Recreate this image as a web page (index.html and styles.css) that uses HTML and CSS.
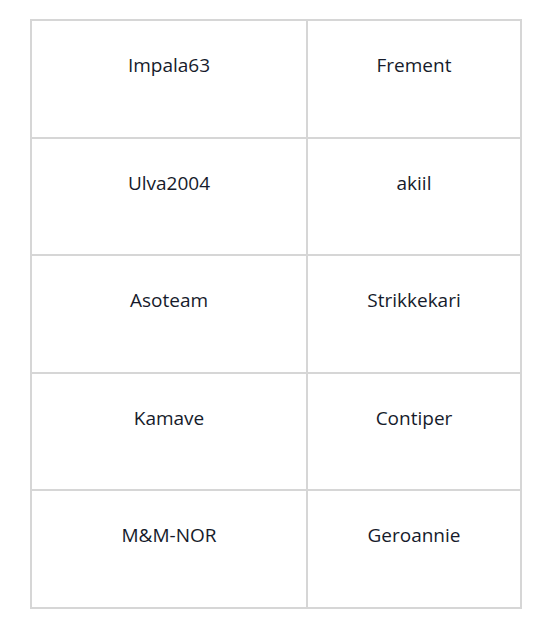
FILE: index.html
```html
<!DOCTYPE html>
<html>
<head>
<meta charset="utf-8">
<link rel="stylesheet" href="styles.css">
</head>
<body>
<div class="grid">
  <div class="cell">Impala63</div>
  <div class="cell">Frement</div>
  <div class="cell">Ulva2004</div>
  <div class="cell">akiil</div>
  <div class="cell">Asoteam</div>
  <div class="cell">Strikkekari</div>
  <div class="cell">Kamave</div>
  <div class="cell">Contiper</div>
  <div class="cell">M&amp;M-NOR</div>
  <div class="cell">Geroannie</div>
</div>
</body>
</html>
```
FILE: styles.css
```css
html, body {
  margin: 0;
  background: #ffffff;
}
body {
  padding: 19px 0 0 30px;
  font-family: "Open Sans", "Liberation Sans", sans-serif;
  font-size: 19px;
  color: #161b2b;
}
.grid {
  display: grid;
  grid-template-columns: 276px 214px;
  grid-template-rows: repeat(5, 117.5px);
  width: 490px;
  border-top: 2px solid #d6d6d6;
  border-left: 2px solid #d6d6d6;
}
.cell {
  border-right: 2px solid #d6d6d6;
  border-bottom: 2px solid #d6d6d6;
  text-align: center;
  padding-top: 31px;
  line-height: 26px;
}
```
